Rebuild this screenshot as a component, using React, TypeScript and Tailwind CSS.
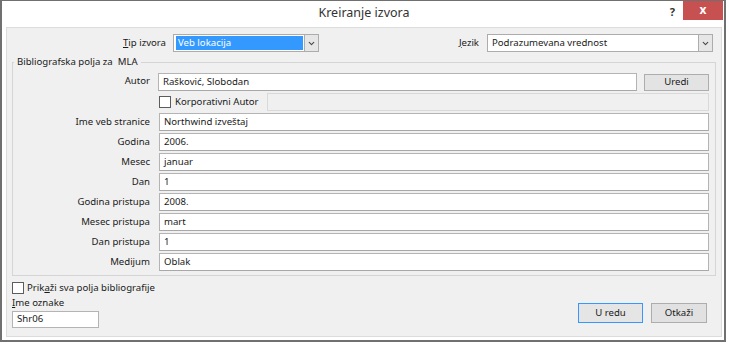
import { ChevronDown } from 'lucide-react';

const fields = [
  ['Ime veb stranice', 'Northwind izveštaj'],
  ['Godina', '2006.'],
  ['Mesec', 'januar'],
  ['Dan', '1'],
  ['Godina pristupa', '2008.'],
  ['Mesec pristupa', 'mart'],
  ['Dan pristupa', '1'],
  ['Medijum', 'Oblak'],
];

function Check() {
  return <div className="w-[12px] h-[12px] bg-white border border-[#5c5c5c] shrink-0" />;
}

function Combo({ value, selected, width }: { value: string; selected?: boolean; width: string }) {
  return (
    <div className={`${width} h-[18px] flex bg-white border border-[#acacac]`}>
      <div className="flex-1 flex items-center pl-[2px] pr-[1px] py-[1px]">
        {selected ? (
          <span className="w-full h-full bg-[#3399ff] text-white pl-[2px] leading-[14px]">{value}</span>
        ) : (
          <span className="pl-[2px] leading-[14px]">{value}</span>
        )}
      </div>
      <div className="w-[14px] bg-[#e6e6e6] border-l border-[#acacac] flex items-center justify-center">
        <ChevronDown className="w-[9px] h-[9px] text-[#4a4a4a]" strokeWidth={3} />
      </div>
    </div>
  );
}

function Field({ value }: { value: string }) {
  return (
    <div className="flex-1 h-[18px] bg-white border border-[#b4b4b4] border-b-[#a8a8a8] flex items-center pl-[4px] leading-[14px]">
      {value}
    </div>
  );
}

export default function App() {
  return (
    <div className="w-[729px] h-[344px] bg-white text-[9.6px] text-[#1a1a1a] font-['Segoe_UI','Noto_Sans',sans-serif]">
      <div className="w-[726px] h-[342px] bg-white border-x-2 border-b-2 border-t border-[#707070] flex flex-col">
        {/* title bar */}
        <div className="relative h-[26px] shrink-0 flex items-center justify-center">
          <span className="text-[12.5px] text-[#333] pl-[2px] pb-[1px]">Kreiranje izvora</span>
          <div className="absolute right-[1px] top-0 flex items-start">
            <span className="mt-[3px] mr-[8px] text-[11px] font-bold text-[#333]">?</span>
            <div className="w-[40px] h-[19px] bg-[#c75050] flex items-center justify-center text-white text-[12px] font-bold leading-none pb-[2px]">
              x
            </div>
          </div>
        </div>

        {/* client area */}
        <div className="flex-1 ml-[4px] mr-[2px] mb-[3px] bg-[#f0f0f0] border border-[#dcdcdc] flex flex-col">
          <div className="flex items-center mt-[6px] h-[18px]">
            <span className="w-[159px] text-right">
              <span className="underline">T</span>ip izvora
            </span>
            <div className="ml-[7px]">
              <Combo value="Veb lokacija" selected width="w-[146px]" />
            </div>
            <span className="ml-auto">
              <span className="underline">J</span>ezik
            </span>
            <div className="ml-[8px] mr-[8px]">
              <Combo value="Podrazumevana vrednost" width="w-[226px]" />
            </div>
          </div>

          <fieldset className="ml-[5px] mr-[6px] mt-[2px] border border-[#d5d5d5] pb-[4px] pr-[6px]">
            <legend className="ml-[1px] px-[3px] leading-[16px]">Bibliografska polja za&nbsp; MLA</legend>
            <div className="flex flex-col gap-[2px] mt-[2px]">
              <div className="flex items-center h-[19px]">
                <span className="w-[137px] text-right">Autor</span>
                <div className="ml-[8px] w-[479px] flex">
                  <Field value="Rašković, Slobodan" />
                </div>
                <div className="ml-[7px] mt-[1px] w-[65px] h-[17px] bg-[#e3e3e3] border border-[#adadad] flex items-center justify-center">
                  Uredi
                </div>
              </div>
              <div className="flex items-center h-[18px]">
                <div className="ml-[146px] w-[108px] flex items-center">
                  <Check />
                  <span className="ml-[4px]">Korporativni Autor</span>
                </div>
                <div className="flex-1 h-[18px] bg-[#f0f0f0] border border-[#d9d9d9]" />
              </div>
              {fields.map(([label, value]) => (
                <div key={label} className="flex items-center h-[18px]">
                  <span className="w-[137px] text-right">{label}</span>
                  <div className="ml-[9px] flex-1 flex">
                    <Field value={value} />
                  </div>
                </div>
              ))}
            </div>
          </fieldset>

          <div className="flex items-end mt-[6px] ml-[5px] mr-[14px]">
            <div className="flex flex-col">
              <div className="flex items-center h-[12px]">
                <Check />
                <span className="ml-[3px]">
                  Prik<span className="underline">a</span>ži sva polja bibliografije
                </span>
              </div>
              <span className="mt-[1px] leading-[15px]">
                <span className="underline">I</span>me oznake
              </span>
              <div className="mt-[1px] w-[87px] h-[17px] bg-white border border-[#b4b4b4] flex items-center pl-[4px]">
                Shr06
              </div>
            </div>
            <div className="ml-auto mb-[5px] flex gap-[8px]">
              <div className="w-[65px] h-[20px] bg-[#e5e5e5] border border-[#3399ff] flex items-center justify-center">
                U redu
              </div>
              <div className="w-[56px] h-[20px] bg-[#e1e1e1] border border-[#adadad] flex items-center justify-center">
                Otkaži
              </div>
            </div>
          </div>
        </div>
      </div>
    </div>
  );
}
